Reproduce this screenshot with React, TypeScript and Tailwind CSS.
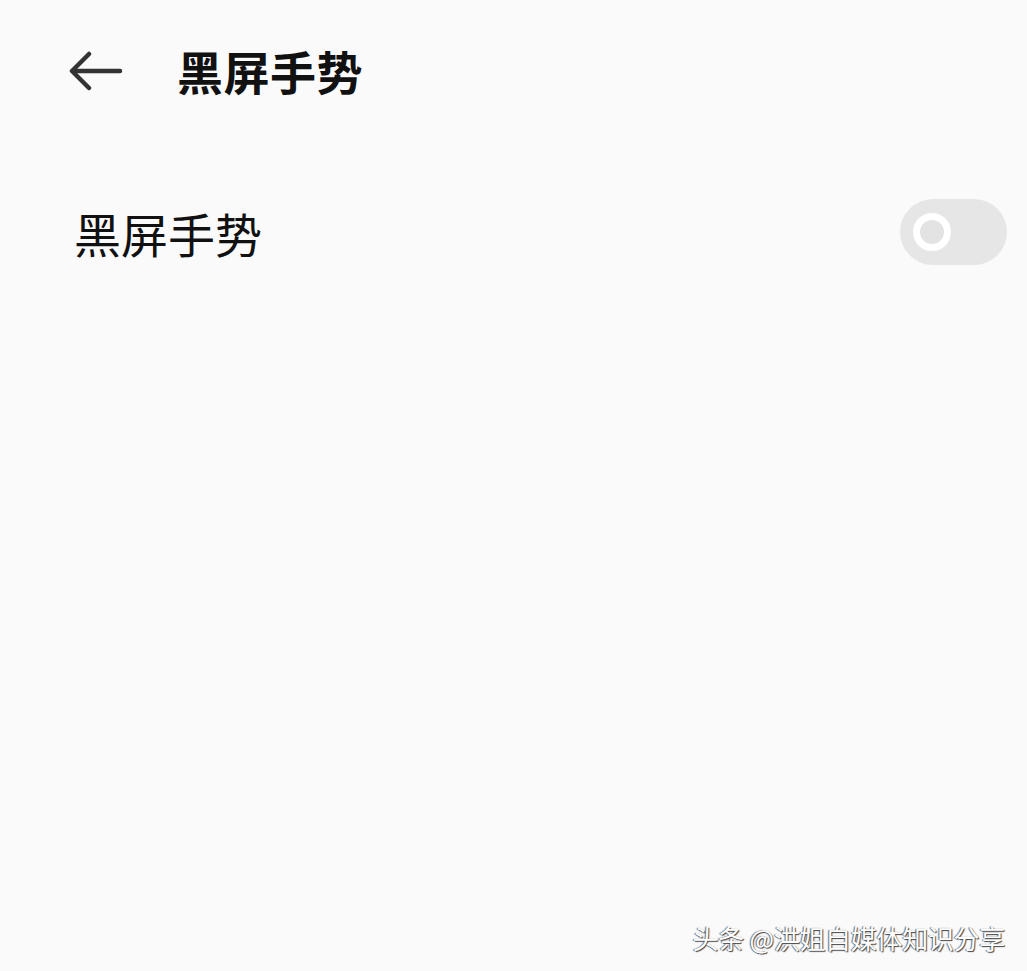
import React from 'react';

const cjk = { fontFamily: '"Noto Sans CJK SC", "Noto Sans", sans-serif' };

const BackArrow = () => (
  <svg width="54" height="40" viewBox="0 0 54 40" fill="none" stroke="#333333" strokeWidth="4.5" strokeLinecap="round" strokeLinejoin="round">
    <path d="M51 20H4" />
    <path d="M20 3L3 20l17 17" />
  </svg>
);

const Toggle = () => (
  <div className="w-[107px] h-[66px] rounded-full bg-[#e6e6e6] flex items-center pl-[13px]">
    <div className="w-[38px] h-[38px] rounded-full border-[7px] border-white bg-[#e3e3e3]" />
  </div>
);

export default function App() {
  return (
    <div className="relative w-[1027px] h-[971px] bg-[#fafafa] overflow-hidden" style={cjk}>
      <header className="flex items-center h-[142px] pl-[69px]">
        <BackArrow />
        <h1 className="ml-[54px] text-[46px] font-semibold text-[#111] leading-none tracking-[0.5px] -mt-[2px]">黑屏手势</h1>
      </header>
      <div className="flex items-center justify-between pl-[74px] pr-[20px] mt-[57px]">
        <span className="text-[47px] text-[#111] leading-none">黑屏手势</span>
        <Toggle />
      </div>
      <div
        className="absolute right-[22px] bottom-[20px] text-[26px] text-white leading-none tracking-[-0.3px]"
        style={{ textShadow: '1px 1px 1px #444, -1px 0 1px #666' }}
      >
        头条 @洪姐自媒体知识分享
      </div>
    </div>
  );
}
